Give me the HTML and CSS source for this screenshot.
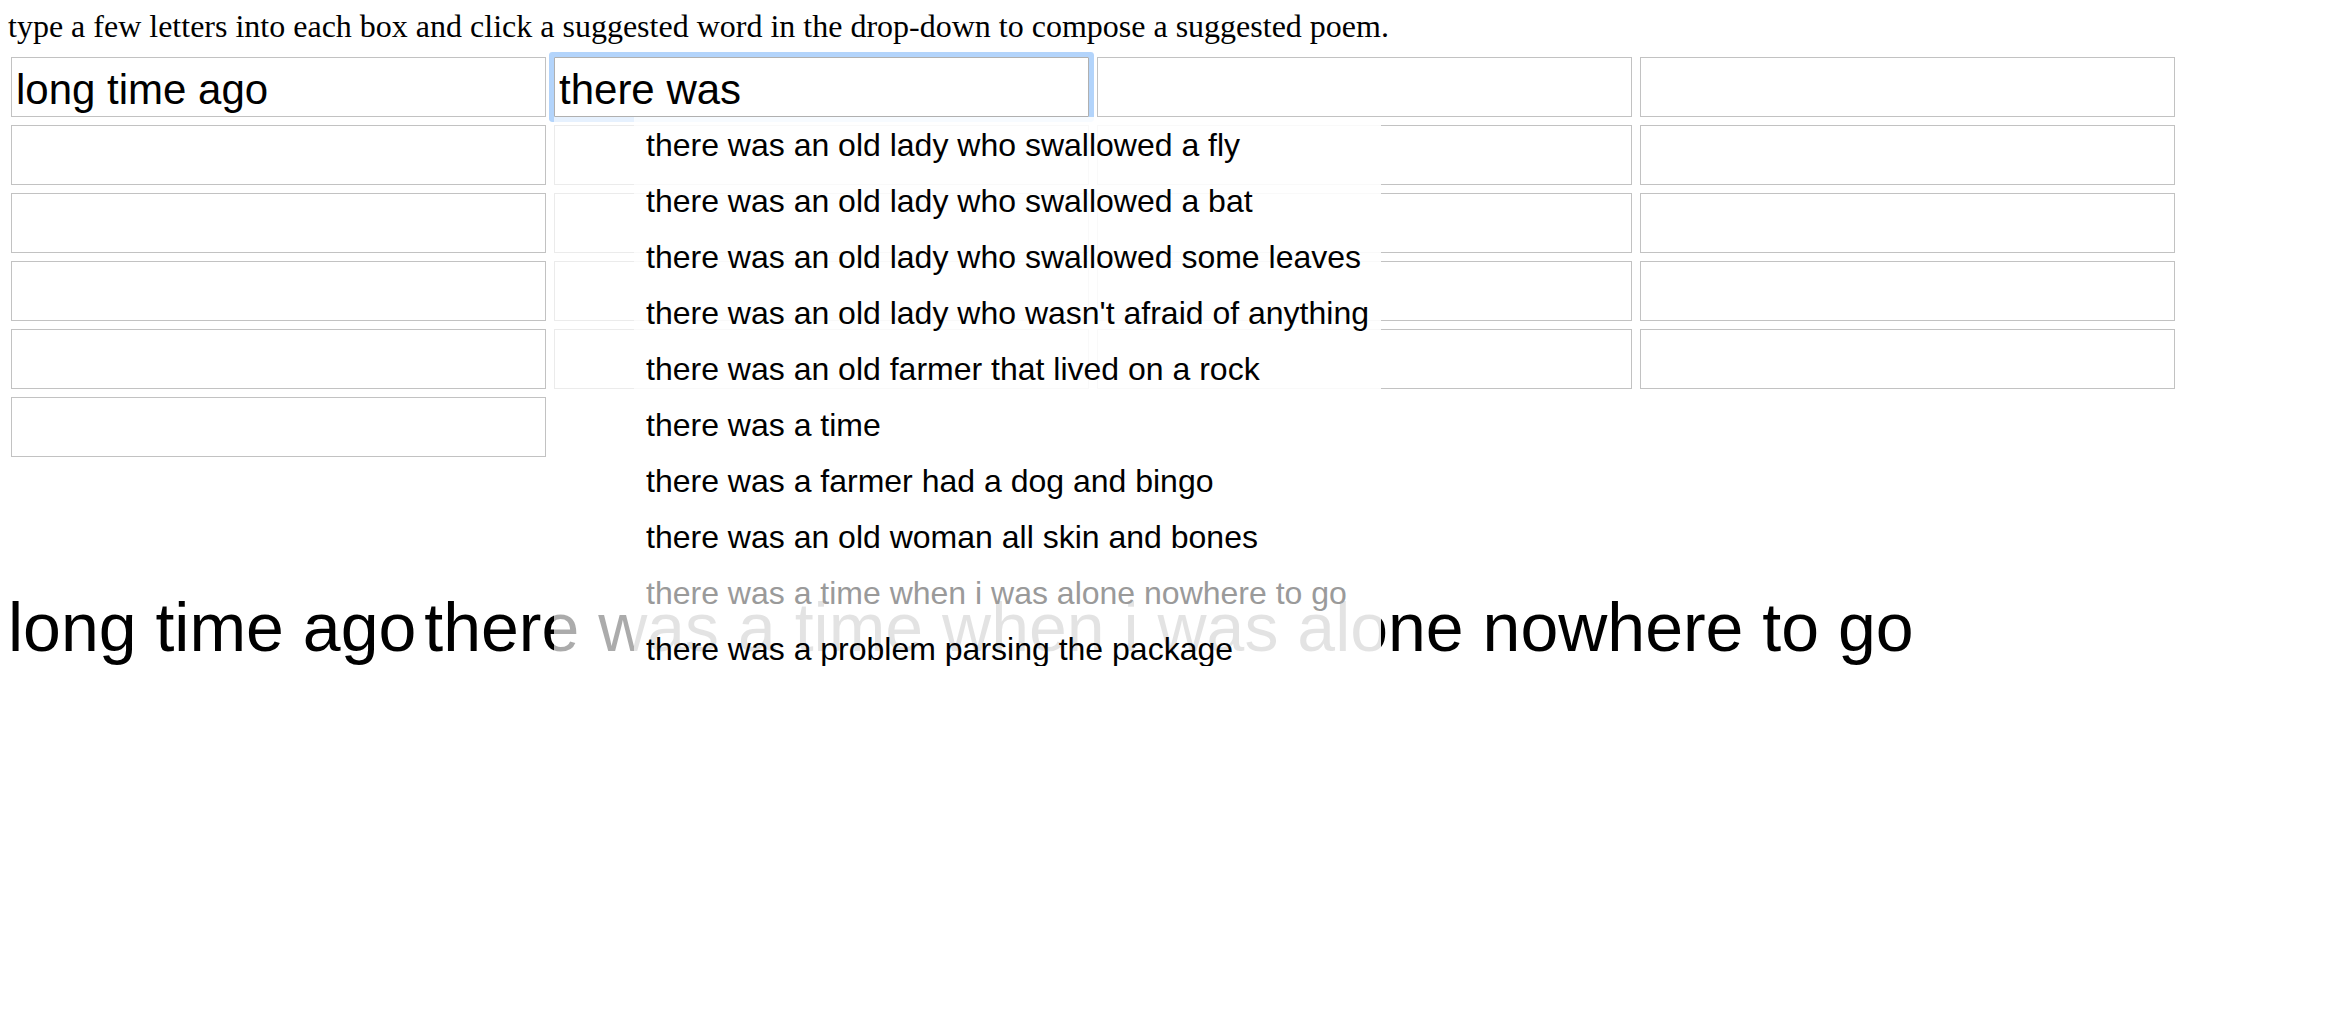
FILE: index.html
```html
<!DOCTYPE html>
<html>
<head>
<meta charset="utf-8">
<title>poem</title>
<link rel="stylesheet" href="styles.css">
</head>
<body>
<div class="intro">type a few letters into each box and click a suggested word in the drop-down to compose a suggested poem.</div>
<div class="grid">
  <div class="cell"><input class="line" type="text" value="long time ago"></div>
  <div class="cell">
    <input class="line focused" type="text" value="there was">
    <ul class="suggest">
      <li>there was an old lady who swallowed a fly</li>
      <li>there was an old lady who swallowed a bat</li>
      <li>there was an old lady who swallowed some leaves</li>
      <li>there was an old lady who wasn't afraid of anything</li>
      <li>there was an old farmer that lived on a rock</li>
      <li>there was a time</li>
      <li>there was a farmer had a dog and bingo</li>
      <li>there was an old woman all skin and bones</li>
      <li class="hover">there was a time when i was alone nowhere to go</li>
      <li>there was a problem parsing the package</li>
    </ul>
  </div>
  <div class="cell"><input class="line" type="text"></div>
  <div class="cell"><input class="line" type="text"></div>
  <div class="cell"><input class="line" type="text"></div>
  <div class="cell"><input class="line" type="text"></div>
  <div class="cell"><input class="line" type="text"></div>
  <div class="cell"><input class="line" type="text"></div>
  <div class="cell"><input class="line" type="text"></div>
  <div class="cell"><input class="line" type="text"></div>
  <div class="cell"><input class="line" type="text"></div>
  <div class="cell"><input class="line" type="text"></div>
  <div class="cell"><input class="line" type="text"></div>
  <div class="cell"><input class="line" type="text"></div>
  <div class="cell"><input class="line" type="text"></div>
  <div class="cell"><input class="line" type="text"></div>
  <div class="cell"><input class="line" type="text"></div>
  <div class="cell"><input class="line" type="text"></div>
  <div class="cell"><input class="line" type="text"></div>
  <div class="cell"><input class="line" type="text"></div>
  <div class="cell"><input class="line" type="text"></div>
</div>
<div class="poem"><span class="verse">long time ago</span><span class="verse">there was a time when i was alone nowhere to go</span></div>
</body>
</html>
```

FILE: styles.css
```css
html, body {
  background: #ffffff;
}

body {
  margin: 8px;
  font-family: "Liberation Serif", "Times New Roman", serif;
  font-size: 32px;
  color: #000000;
}

.intro {
  line-height: 37px;
}

.grid {
  display: grid;
  grid-template-columns: repeat(4, 535px);
  grid-auto-rows: 60px;
  column-gap: 8px;
  row-gap: 8px;
  margin: 12px 0 0 3px;
}

.cell {
  position: relative;
}

.line {
  display: block;
  box-sizing: border-box;
  width: 535px;
  height: 60px;
  margin: 0;
  padding: 6px 4px 0 4px;
  border: 1px solid #c2c2c2;
  border-radius: 0;
  background: #ffffff;
  font-family: "Liberation Sans", Arial, sans-serif;
  font-size: 42px;
  color: #000000;
  outline: none;
}

.line.focused {
  border-radius: 1px;
  border-color: #b0b0b0;
  box-shadow: 0 0 0 5px #b3d4fb;
}

.suggest {
  position: absolute;
  top: 100%;
  left: 0;
  margin: 0;
  padding: 0 0 0 80px;
  list-style: none;
  white-space: nowrap;
  background: rgba(255, 255, 255, 0.67);
  font-family: "Liberation Sans", Arial, sans-serif;
  font-size: 32px;
  z-index: 2;
}

.suggest li {
  height: 56px;
  line-height: 56px;
  padding: 0 12px;
  background: rgba(255, 255, 255, 0.67);
  color: #000000;
}

.suggest li.hover {
  color: #9a9a9a;
}

.poem {
  margin-top: 131px;
  font-family: "Liberation Sans", Arial, sans-serif;
  font-size: 68px;
  line-height: 78px;
  white-space: nowrap;
}

.verse {
  margin-right: 8px;
}
```
